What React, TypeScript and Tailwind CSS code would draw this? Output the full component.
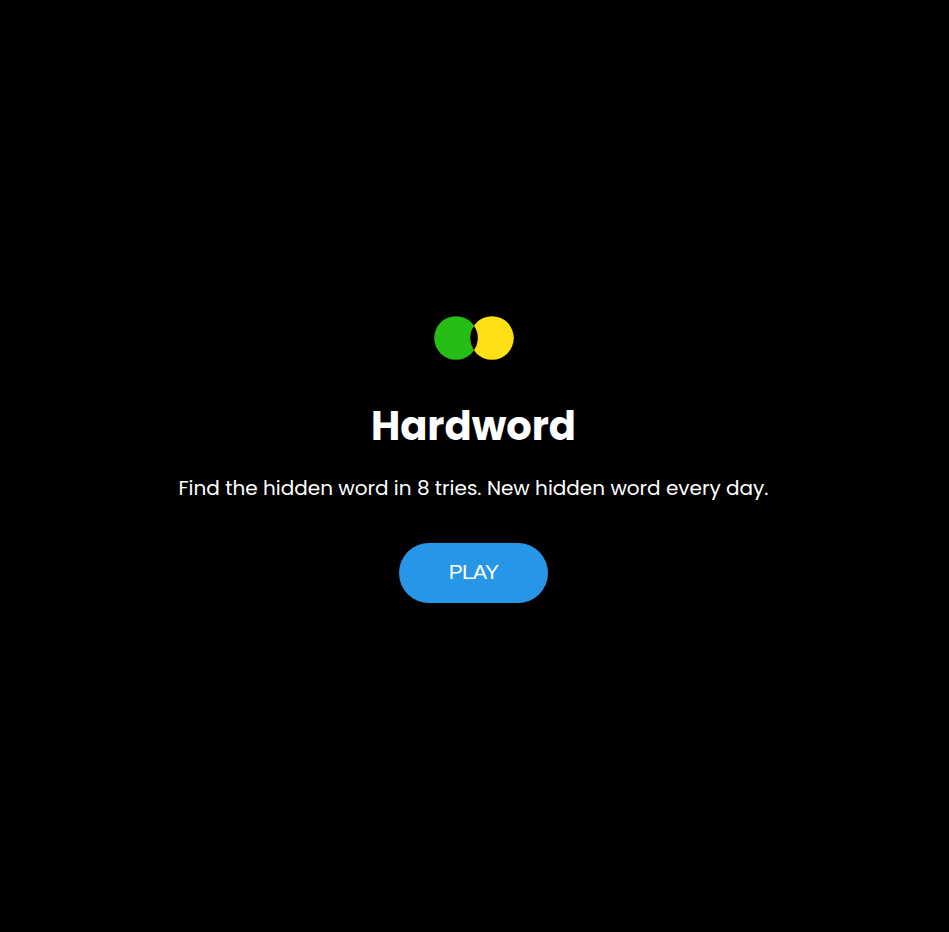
export default function App() {
  return (
    <main className="flex h-screen w-full flex-col items-center bg-black pt-[316px] pr-[2px] text-white">
      <svg className="h-[44px] w-[80px] shrink-0" viewBox="0 0 80 44" aria-hidden="true">
        <circle cx="22" cy="22" r="21.8" fill="#26bd15" />
        <circle cx="58" cy="22" r="21.8" fill="#ffe014" />
        <path d="M40 9.7A21.8 21.8 0 0 1 40 34.3A21.8 21.8 0 0 1 40 9.7Z" fill="#000" />
      </svg>
      <h1 className="mt-[36px] font-['Poppins','Inter',sans-serif] text-[40px] leading-[60px] font-bold">Hardword</h1>
      <p className="mt-[17px] font-['Poppins','Inter',sans-serif] text-[20px] leading-[30px]">Find the hidden word in 8 tries. New hidden word every day.</p>
      <button className="mt-[40px] h-[60px] w-[149px] rounded-full bg-[#2796e7] pb-[2px] font-['Liberation_Sans',Arial,sans-serif] text-[21px] tracking-[-0.6px]">PLAY</button>
    </main>
  );
}
